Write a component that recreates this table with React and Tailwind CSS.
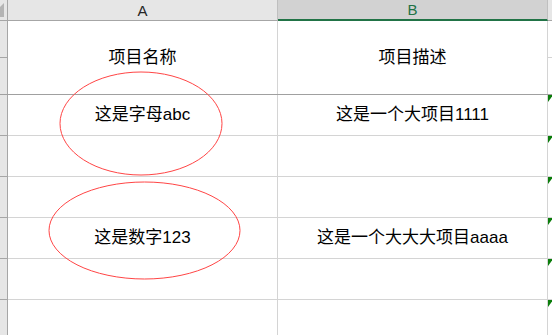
import React from "react";

const font = { fontFamily: '"Liberation Sans", "Noto Sans CJK SC", sans-serif' };

const rows = [
  { a: "这是字母abc", b: "这是一个大项目1111" },
  { a: "", b: "" },
  { a: "", b: "" },
  { a: "这是数字123", b: "这是一个大大大项目aaaa" },
  { a: "", b: "" },
  { a: "", b: "" },
];

function ErrorMark() {
  return (
    <div className="w-0 h-0 border-t-[7px] border-r-[5px] border-t-[#0b7d0b] border-r-transparent" />
  );
}

export default function App() {
  return (
    <div
      className="relative w-[552px] h-[335px] overflow-hidden bg-white text-black"
      style={font}
    >
      {/* column headers */}
      <div className="flex h-[21px]">
        <div className="relative w-[8px] shrink-0 bg-[#e6e6e6] border-r border-b border-[#a6a6a6]">
          <svg width="8" height="21" className="absolute left-0 top-0">
            <polygon points="0,7 4,3 4,17 0,17" fill="#b4b4b4" />
          </svg>
        </div>
        <div className="w-[270px] shrink-0 flex items-center justify-center bg-[#e6e6e6] border-r border-r-[#bfbfbf] border-b border-b-[#a6a6a6] text-[15px] leading-none text-[#262626]">
          A
        </div>
        <div className="w-[270px] shrink-0 flex items-center justify-center bg-[#d2d2d2] border-r border-r-[#bfbfbf] border-b-2 border-b-[#217346] text-[15px] leading-none text-[#217346]">
          B
        </div>
        <div className="flex-1 bg-[#e6e6e6] border-b border-[#a6a6a6]" />
      </div>

      {/* merged title row */}
      <div className="flex h-[74px] border-b border-[#a0a0a0]">
        <div className="w-[8px] shrink-0 flex flex-col bg-[#e6e6e6] border-r border-[#a6a6a6]">
          <div className="h-[37px] border-b border-[#a6a6a6]" />
          <div className="flex-1" />
        </div>
        <div className="w-[270px] shrink-0 flex items-center justify-center border-r border-[#d4d4d4] text-[17px]">
          项目名称
        </div>
        <div className="w-[270px] shrink-0 flex items-center justify-center border-r border-[#d4d4d4] text-[17px]">
          项目描述
        </div>
        <div className="flex-1 flex flex-col">
          <div className="h-[37px] border-b border-[#d4d4d4]" />
          <div className="flex-1" />
        </div>
      </div>

      {/* data rows */}
      {rows.map((r, i) => (
        <div key={i} className="flex h-[41px]">
          <div className="w-[8px] shrink-0 bg-[#e6e6e6] border-r border-b border-[#a6a6a6]" />
          <div className="w-[270px] shrink-0 flex items-center justify-center border-r border-b border-[#d4d4d4] text-[17px]">
            {r.a}
          </div>
          <div className="w-[270px] shrink-0 flex items-center justify-center border-r border-b border-[#d4d4d4] text-[17px]">
            {r.b}
          </div>
          <div className="flex-1 border-b border-[#d4d4d4]">
            <ErrorMark />
          </div>
        </div>
      ))}

      {/* drawn shapes over the sheet */}
      <svg
        className="absolute left-0 top-0 pointer-events-none"
        width="552"
        height="335"
      >
        <ellipse cx="141" cy="123.5" rx="81" ry="51.5" fill="none" stroke="#ff4545" strokeWidth="1" />
        <ellipse cx="144.5" cy="230.5" rx="95.5" ry="48.5" fill="none" stroke="#ff4545" strokeWidth="1" />
      </svg>
    </div>
  );
}
